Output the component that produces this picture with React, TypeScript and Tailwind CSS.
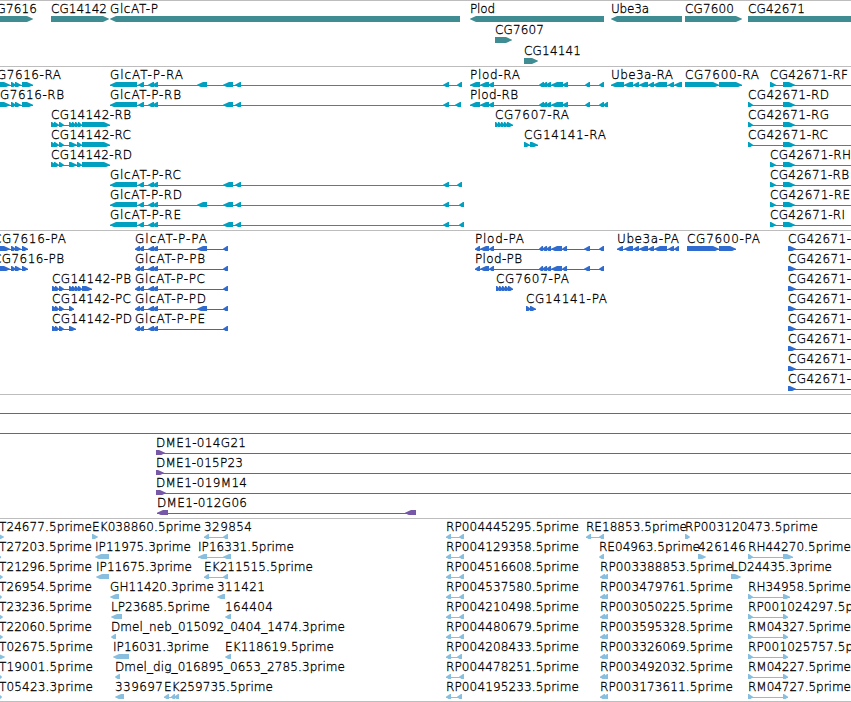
type Exon = [number, number];

interface Feature {
  label?: string;
  // left and right edge of the label
  text?: [number, number];
  strand: '+' | '-';
  exons: Exon[];
  // intron line, when it reaches beyond the exons
  span?: [number, number];
}

interface Track {
  name: string;
  color: string;
  rowHeight: number;
  padding: string;
  rows: Feature[][];
}

const VIEW_WIDTH = 851;
const HEAD = 6;

const f = (
  label: string,
  left: number,
  right: number,
  strand: '+' | '-',
  exons: Exon[],
  span?: [number, number],
): Feature => ({ label, text: [left, right], strand, exons, span });

// Genes
const GENES: Feature[][] = [
  [
    f('CG7616', -12, 37, '+', [[-10, 33]]),
    f('CG14142', 51, 107, '+', [[51, 109]]),
    f('GlcAT-P', 110, 158, '-', [[110, 460]]),
    f('Plod', 470, 495, '-', [[470, 604]]),
    f('Ube3a', 611, 649, '-', [[611, 682]]),
    f('CG7600', 685, 734, '+', [[685, 742]]),
    f('CG42671', 748, 805, '+', [[748, 870]]),
  ],
  [f('CG7607', 495, 544, '+', [[495, 512]])],
  [f('CG14141', 524, 581, '+', [[524, 538]])],
];

// Transcripts
const glcTail: Exon[] = [[110, 137], [138, 144], [148, 154], [152, 158]];
const glcMid: Exon[] = [[223, 233], [235, 241], [443, 449]];
const cg7616R: Exon[] = [[-5, 10], [11, 16], [15, 21], [22, 33]];
const cg14142Head: Exon[] = [[51, 56], [54, 59], [59, 64]];
const plodR: Exon[] = [
  [470, 480], [480, 489], [488, 494], [539, 544], [542, 547],
  [545, 551], [551, 563], [562, 568], [585, 590],
];
const cg42671Short: Exon[] = [[770, 776], [783, 795]];
const cg42671Long: Exon[] = [[748, 753], [783, 795]];
const toEdge = (x: number): [number, number] => [x, VIEW_WIDTH];

const TRANSCRIPTS: Feature[][] = [
  [
    f('CG7616-RA', -12, 61, '+', cg7616R),
    f('GlcAT-P-RA', 110, 183, '-', [...glcTail, [197, 207], ...glcMid, [457, 462]]),
    f('Plod-RA', 470, 520, '-', [...plodR, [599, 604]]),
    f('Ube3a-RA', 611, 673, '-', [
      [611, 624], [624, 633], [633, 639], [639, 648], [648, 654], [653, 667], [668, 674], [674, 682],
    ]),
    f('CG7600-RA', 685, 759, '+', [[685, 719], [719, 742]]),
    f('CG42671-RF', 770, 848, '+', cg42671Short, toEdge(770)),
  ],
  [
    f('CG7616-RB', -9, 64, '+', cg7616R),
    f('GlcAT-P-RB', 110, 181, '-', [...glcTail, ...glcMid, [455, 461]]),
    f('Plod-RB', 470, 518, '-', [...plodR, [599, 604], [603, 608]]),
    f('CG42671-RD', 748, 829, '+', cg42671Long, toEdge(748)),
  ],
  [
    f('CG14142-RB', 51, 131, '+', [...cg14142Head, [69, 74], [72, 76], [75, 79], [78, 82], [82, 110]]),
    f('CG7607-RA', 495, 569, '+', [[495, 499], [498, 502], [501, 505], [504, 508], [507, 513]]),
    f('CG42671-RG', 748, 829, '+', cg42671Long, toEdge(748)),
  ],
  [
    f('CG14142-RC', 51, 131, '+', [...cg14142Head, [69, 77], [77, 82], [82, 110]]),
    f('CG14141-RA', 524, 606, '+', [[524, 530], [530, 538]]),
    f('CG42671-RC', 748, 828, '+', cg42671Long, toEdge(748)),
  ],
  [
    f('CG14142-RD', 51, 132, '+', [...cg14142Head, [69, 77], [77, 82], [82, 110]]),
    f('CG42671-RH', 770, 851, '+', cg42671Short, toEdge(770)),
  ],
  [
    f('GlcAT-P-RC', 110, 181, '-', [...glcTail, ...glcMid, [457, 462]]),
    f('CG42671-RB', 770, 849, '+', cg42671Short, toEdge(770)),
  ],
  [
    f('GlcAT-P-RD', 110, 182, '-', [...glcTail, [197, 207], ...glcMid, [459, 464]]),
    f('CG42671-RE', 770, 850, '+', cg42671Short, toEdge(770)),
  ],
  [
    f('GlcAT-P-RE', 110, 181, '-', [...glcTail, ...glcMid, [459, 464]]),
    f('CG42671-RI', 770, 845, '+', cg42671Short, toEdge(770)),
  ],
];

// Proteins
const glcP: Exon[] = [[135, 140], [139, 144], [148, 154], [152, 158], [223, 228]];
const glcPLong: Exon[] = [...glcP, [197, 207]];
const cg7616P: Exon[] = [[-5, 10], [11, 16], [15, 21], [22, 28]];
const cg14142P: Exon[] = [[52, 57], [55, 59], [59, 64]];
const plodP: Exon[] = [
  [475, 480], [480, 489], [489, 494], [539, 543], [542, 547],
  [546, 551], [551, 562], [562, 567], [584, 590], [599, 604],
];
const cg42671P = f('CG42671-', 788, 851, '+', [[788, 796]], toEdge(788));

const PROTEINS: Feature[][] = [
  [
    f('CG7616-PA', -7, 66, '+', cg7616P),
    f('GlcAT-P-PA', 135, 207, '-', glcPLong),
    f('Plod-PA', 475, 524, '-', plodP),
    f('Ube3a-PA', 617, 679, '-', [
      [617, 623], [624, 633], [633, 639], [639, 648], [648, 654], [654, 667], [668, 674], [674, 679],
    ]),
    f('CG7600-PA', 687, 760, '+', [[687, 719], [719, 736]]),
    cg42671P,
  ],
  [
    f('CG7616-PB', -7, 64, '+', cg7616P),
    f('GlcAT-P-PB', 135, 205, '-', glcP),
    f('Plod-PB', 475, 522, '-', plodP),
    cg42671P,
  ],
  [
    f('CG14142-PB', 52, 131, '+', [...cg14142P, [69, 74], [72, 76], [75, 79], [78, 82], [82, 92]]),
    f('GlcAT-P-PC', 135, 205, '-', glcP),
    f('CG7607-PA', 496, 569, '+', [[496, 500], [499, 503], [502, 506], [505, 509], [508, 513]]),
    cg42671P,
  ],
  [
    f('CG14142-PC', 52, 131, '+', [...cg14142P, [69, 74]]),
    f('GlcAT-P-PD', 135, 206, '-', glcPLong),
    f('CG14141-PA', 526, 607, '+', [[526, 531], [530, 536]]),
    cg42671P,
  ],
  [
    f('CG14142-PD', 52, 132, '+', [...cg14142P, [69, 76]]),
    f('GlcAT-P-PE', 135, 205, '-', glcP),
    cg42671P,
  ],
  [cg42671P],
  [cg42671P],
  [cg42671P],
];

// Clones
const CLONES: Feature[][] = [
  [{ strand: '+', exons: [], span: [0, VIEW_WIDTH] }],
  [{ strand: '+', exons: [], span: [0, VIEW_WIDTH] }],
  [f('DME1-014G21', 156, 246, '+', [[156, 165]], toEdge(156))],
  [f('DME1-015P23', 156, 243, '+', [[156, 164]], toEdge(156))],
  [f('DME1-019M14', 156, 247, '+', [[156, 166]], toEdge(156))],
  [f('DME1-012G06', 157, 247, '-', [[157, 168], [405, 416]])],
];

// ESTs
const left = (label: string, right: number, tip: number) => f(label, -1, right, '+', [[-2, tip]]);
const rp = (label: string, end = 464) => f(label, 446, 579, '-', [[446, 451], [end - 5, end]]);
const rp3 = (label: string) => f(label, 600, 733, '-', [[600, 605], [603, 608]]);
const long = (label: string, right: number, end = 788) => f(label, 748, right, '+', [[748, 753], [783, end]]);

const ESTS: Feature[][] = [
  [
    left('T24677.5prime', 92, 4),
    f('EK038860.5prime', 92, 201, '+', [[92, 98]]),
    f('329854', 204, 252, '-', [[204, 209], [223, 228]]),
    rp('RP004445295.5prime'),
    f('RE18853.5prime', 586, 687, '-', [[586, 591], [599, 604]]),
    f('RP003120473.5prime', 685, 818, '+', [[685, 690]]),
  ],
  [
    left('T27203.5prime', 92, 1),
    f('IP11975.3prime', 95, 191, '-', [[95, 109]]),
    f('IP16331.5prime', 198, 294, '-', [[198, 207], [223, 231]]),
    rp('RP004129358.5prime'),
    f('RE04963.5prime', 599, 700, '-', [[599, 604]]),
    f('426146', 698, 746, '+', [[698, 706]]),
    long('RH44270.5prime', 851, 793),
  ],
  [
    left('T21296.5prime', 92, 3),
    f('IP11675.3prime', 96, 192, '-', [[96, 109]]),
    f('EK211515.5prime', 204, 313, '-', [[204, 209], [223, 228]]),
    rp('RP004516608.5prime'),
    rp3('RP003388853.5prime'),
    f('LD24435.3prime', 731, 832, '+', [[731, 741]]),
  ],
  [
    left('T26954.5prime', 92, 2),
    f('GH11420.3prime', 110, 214, '-', [[110, 119]]),
    f('311421', 217, 265, '-', [[217, 225]]),
    rp('RP004537580.5prime'),
    rp3('RP003479761.5prime'),
    long('RH34958.5prime', 851, 790),
  ],
  [
    left('T23236.5prime', 92, 3),
    f('LP23685.5prime', 111, 210, '-', [[111, 122]]),
    f('164404', 225, 273, '-', [[225, 231]]),
    rp('RP004210498.5prime'),
    rp3('RP003050225.5prime'),
    long('RP001024297.5prime', 881),
  ],
  [
    left('T22060.5prime', 92, 3),
    f('Dmel_neb_015092_0404_1474.3prime', 111, 345, '-', [[111, 116]]),
    rp('RP004480679.5prime'),
    rp3('RP003595328.5prime'),
    long('RM04327.5prime', 851),
  ],
  [
    left('T02675.5prime', 93, 5),
    f('IP16031.3prime', 113, 209, '-', [[113, 129]]),
    f('EK118619.5prime', 225, 334, '-', [[225, 231]]),
    rp('RP004208433.5prime', 462),
    rp3('RP003326069.5prime'),
    long('RP001025757.5prime', 881),
  ],
  [
    left('T19001.5prime', 93, 2),
    f('Dmel_dig_016895_0653_2785.3prime', 115, 345, '-', [[115, 120]]),
    rp('RP004478251.5prime'),
    rp3('RP003492032.5prime'),
    long('RM04227.5prime', 851),
  ],
  [
    left('T05423.3prime', 93, 2),
    f('339697', 115, 163, '-', [[115, 124]]),
    f('EK259735.5prime', 164, 273, '-', [[164, 169], [171, 175], [174, 179]]),
    rp('RP004195233.5prime', 462),
    rp3('RP003173611.5prime'),
    long('RM04727.5prime', 851),
  ],
];

const TRACKS: Track[] = [
  { name: 'genes', color: '#408c93', rowHeight: 21, padding: 'pb-[2px]', rows: GENES },
  { name: 'transcripts', color: '#00a0c0', rowHeight: 20, padding: 'pb-[3px]', rows: TRANSCRIPTS },
  { name: 'proteins', color: '#306cd0', rowHeight: 20, padding: 'pb-[3px]', rows: PROTEINS },
  { name: 'clones', color: '#7758a8', rowHeight: 20, padding: 'pb-[3px]', rows: CLONES },
  { name: 'ests', color: '#88bfdf', rowHeight: 20, padding: 'pb-[2px]', rows: ESTS },
];

function exonPoints([x1, x2]: Exon, strand: '+' | '-') {
  // d points from the tip back into the bar
  const d = strand === '+' ? -1 : 1;
  const tip = strand === '+' ? x2 : x1;
  const base = strand === '+' ? x1 : x2;
  const head = Math.min(HEAD, x2 - x1 - 1);
  return [
    [base, 15],
    [tip + d * head, 15],
    [tip, 17.7],
    [tip, 18.3],
    [tip + d * head, 21],
    [base, 21],
  ].map(p => p.join(',')).join(' ');
}

function FeatureGlyph({ feature, color }: { feature: Feature; color: string }) {
  const { label, text, strand, exons, span } = feature;
  const start = span ? span[0] : Math.min(...exons.map(e => e[0]));
  const end = span ? span[1] : Math.max(...exons.map(e => e[1]));

  return (
    <g>
      {(span || exons.length > 1) && (
        <rect x={start} y={18} width={end - start} height={1} fill={color} shapeRendering="crispEdges" />
      )}
      {exons.map((exon, i) => (
        <polygon key={i} points={exonPoints(exon, strand)} fill={color} />
      ))}
      {label && text && (
        <text x={text[0]} y={12} textLength={text[1] - text[0]} fill="#000" stroke="#000" strokeWidth={0.3}>
          {label}
        </text>
      )}
    </g>
  );
}

function TrackView({ track }: { track: Track }) {
  return (
    <section className={`border-t border-[#bdbdbd] ${track.padding}`}>
      {track.rows.map((row, i) => (
        <svg
          key={i}
          width={VIEW_WIDTH}
          height={track.rowHeight}
          className="block font-['DejaVu_Sans','DejaVu_Sans_Light',sans-serif] text-[12px] font-extralight"
        >
          {row.map((feature, j) => (
            <FeatureGlyph key={j} feature={feature} color={track.color} />
          ))}
        </svg>
      ))}
    </section>
  );
}

export default function App() {
  return (
    <main className="w-[851px] h-[702px] overflow-hidden bg-white border-b border-[#bdbdbd]">
      {TRACKS.map(track => (
        <TrackView key={track.name} track={track} />
      ))}
    </main>
  );
}
